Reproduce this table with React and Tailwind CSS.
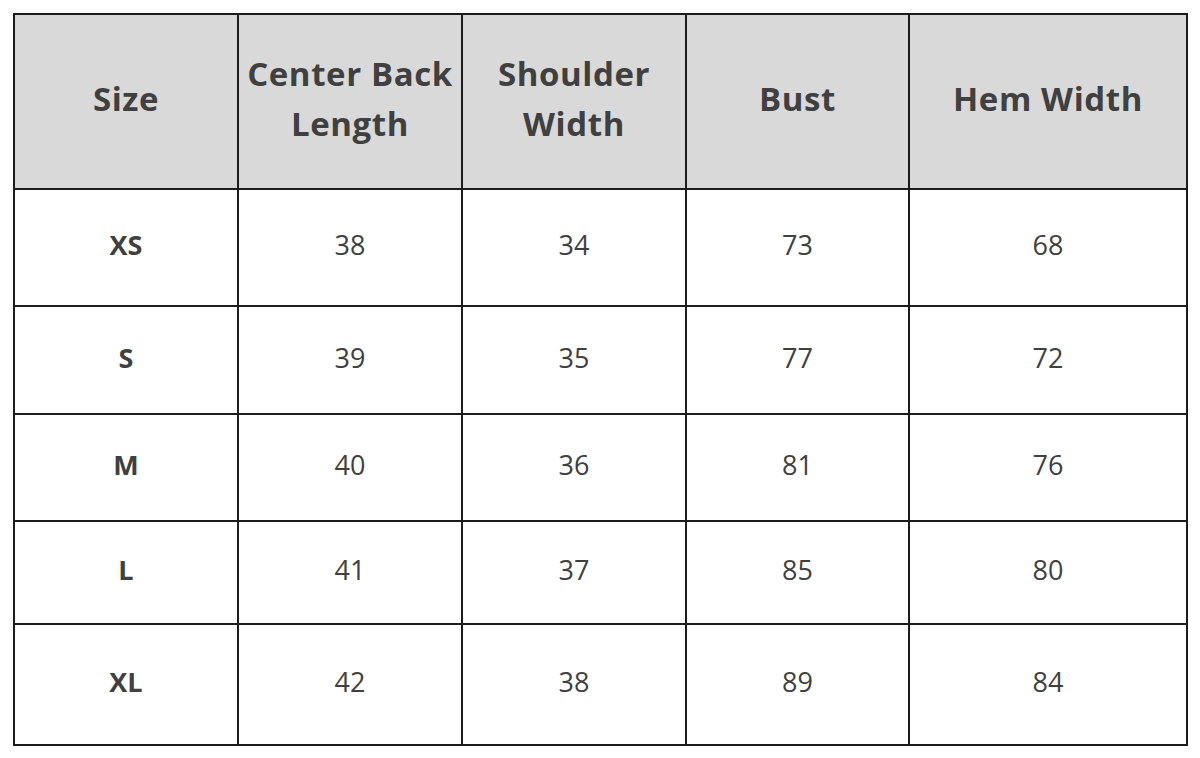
import React from "react";

const HEADERS = [
  ["Size"],
  ["Center Back", "Length"],
  ["Shoulder", "Width"],
  ["Bust"],
  ["Hem Width"],
];

const ROWS = [
  { size: "XS", vals: [38, 34, 73, 68], h: "h-[117px]" },
  { size: "S", vals: [39, 35, 77, 72], h: "h-[108px]" },
  { size: "M", vals: [40, 36, 81, 76], h: "h-[107px]" },
  { size: "L", vals: [41, 37, 85, 80], h: "h-[103px]" },
  { size: "XL", vals: [42, 38, 89, 84], h: "h-[121px]" },
];

const COL_W = ["w-[224px]", "w-[224px]", "w-[224px]", "w-[223px]", "w-[278px]"];

export default function App() {
  return (
    <div className="w-[1200px] h-[758px] bg-white pt-[13px] pl-[13px] font-['Open_Sans','Segoe_UI',sans-serif] text-[#404040]">
      <table className="table-fixed border-collapse border-2 border-[#1c1c1c] w-[1175px]">
        <colgroup>
          {COL_W.map((w, i) => (
            <col key={i} className={w} />
          ))}
        </colgroup>
        <thead>
          <tr className="h-[175px] bg-[#d9d9d9]">
            {HEADERS.map((lines, i) => (
              <th key={i} className="border-2 border-[#1c1c1c] text-center align-middle font-bold text-[33px] tracking-[0.6px] leading-[50px] p-0 pb-[6px]">
                {lines.map(l => (
                  <div key={l}>{l}</div>
                ))}
              </th>
            ))}
          </tr>
        </thead>
        <tbody>
          {ROWS.map(r => (
            <tr key={r.size} className={r.h}>
              <td className="border-2 border-[#1c1c1c] text-center align-middle font-bold text-[27px] p-0 pb-[4px]">{r.size}</td>
              {r.vals.map((v, i) => (
                <td key={i} className="border-2 border-[#1c1c1c] text-center align-middle text-[27px] p-0 pb-[4px]">{v}</td>
              ))}
            </tr>
          ))}
        </tbody>
      </table>
    </div>
  );
}
